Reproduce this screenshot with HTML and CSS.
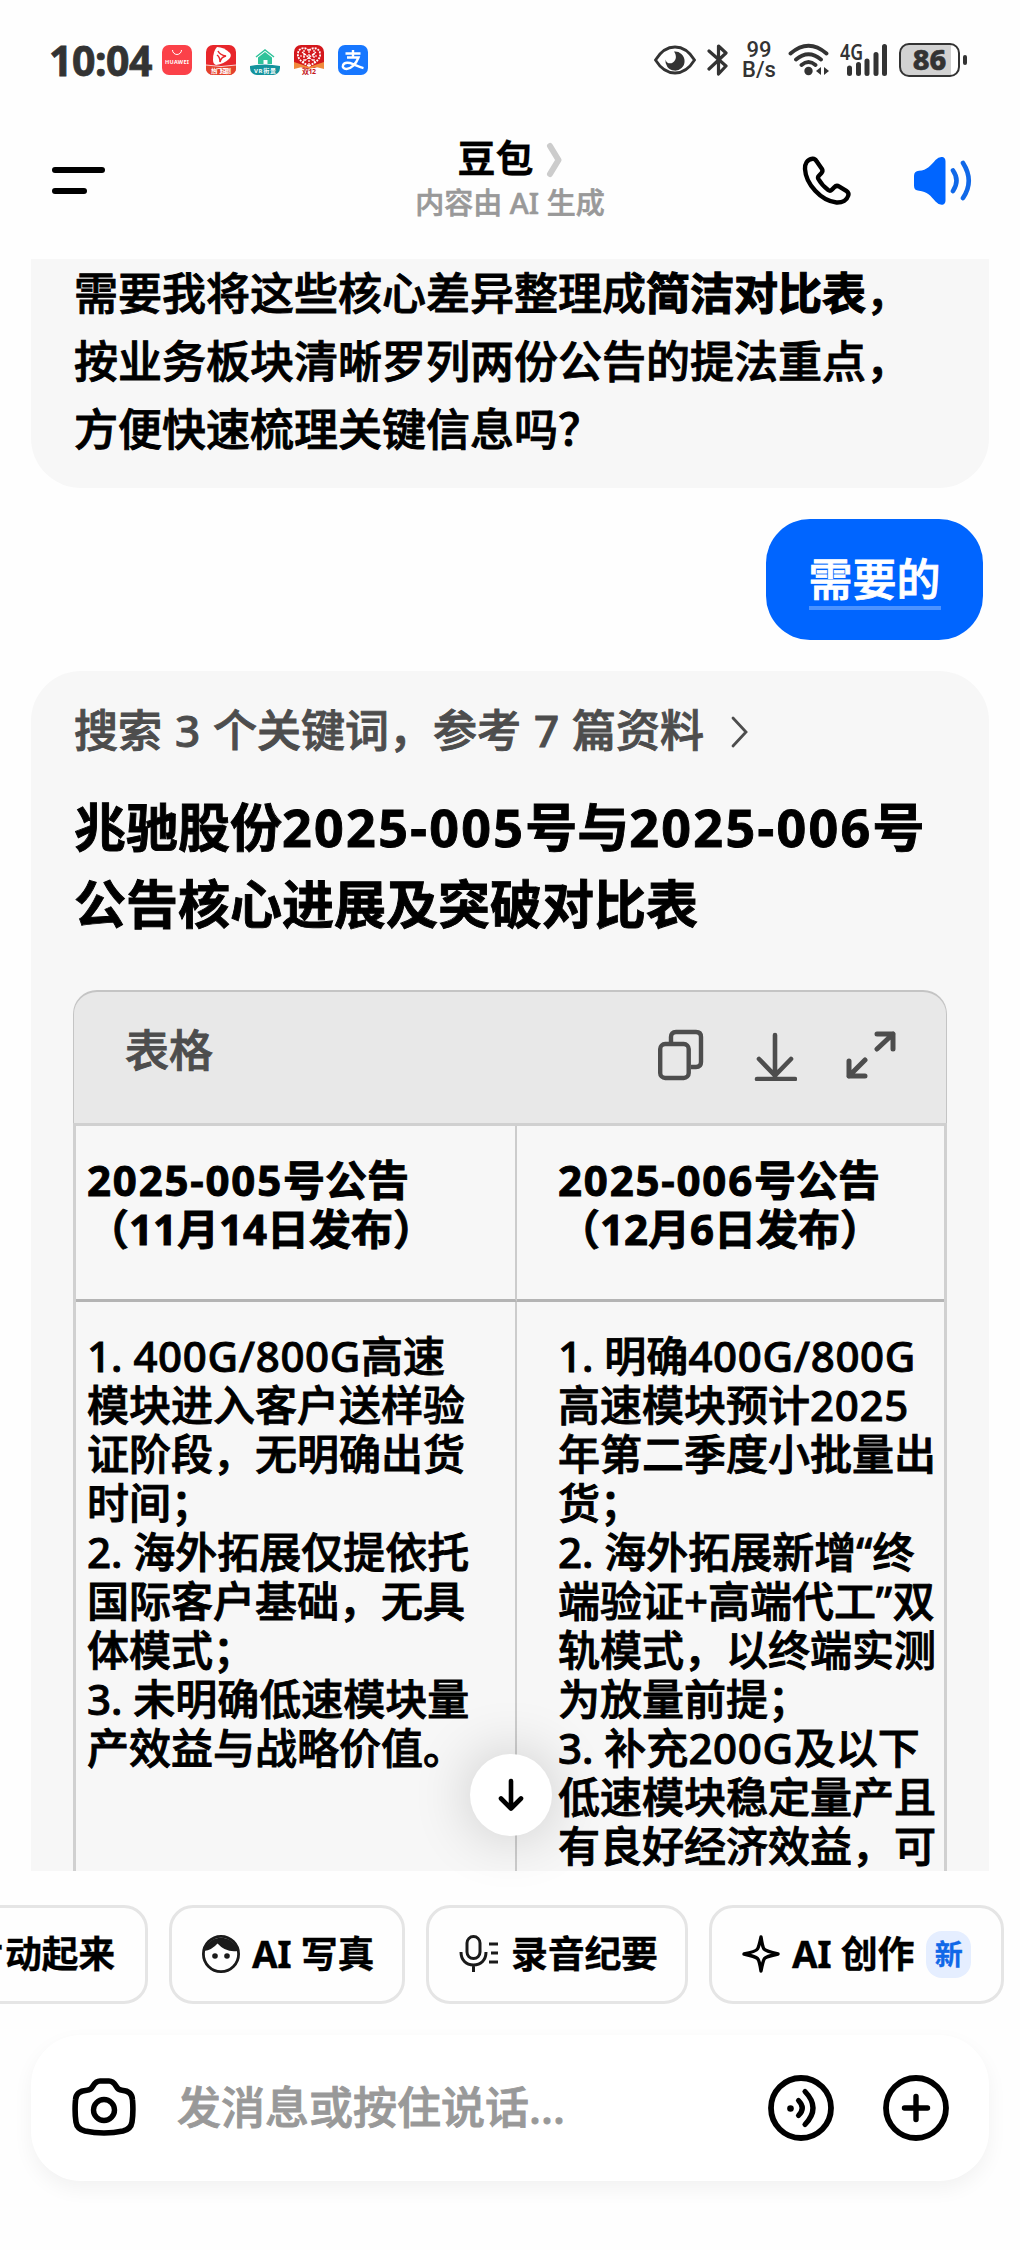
FILE: index.html
```html
<!DOCTYPE html>
<html lang="zh-CN">
<head>
  <meta charset="UTF-8" />
  <title>豆包</title>
  <meta name="viewport" content="width=device-width, initial-scale=1.0">
  <link rel="stylesheet" href="styles.css">
</head>
<body>
  <div class="status-bar">
    <span class="time">10:04</span>
    <div class="apps">
      <svg width="30" height="30" viewBox="0 0 30 30">
        <rect width="30" height="30" rx="7" fill="#fb4149"/>
        <path d="M10.500 5a4.500 4.500 0 0 0 9 0" fill="none" stroke="#fff" stroke-width="1"/>
        <text x="3" y="19" textLength="24" font-size="5.500" font-weight="700" fill="#fff">HUAWEI</text>
      </svg>
      <svg width="30" height="30" viewBox="0 0 30 30">
        <rect width="30" height="30" rx="7" fill="#e8262b"/>
        <path d="M0 20q15 3 30 0v3a7 7 0 0 1-7 7H7a7 7 0 0 1-7-7z" fill="#e4422b"/>
        <path d="M0 20q15 3 30 0" fill="none" stroke="#fff" stroke-width=".8"/>
        <path d="M11 2q7 0 13 6q2 3-1 6q-5 5-13 6q-3-1-3-5q0-9 4-13z" fill="#fff"/>
        <path d="M12 6q2 4 8 5q-5 1-6 6q0-5-3-7" fill="none" stroke="#e8262b" stroke-width="1.500"/>
        <text x="5" y="28" textLength="20" font-size="6" font-weight="700" fill="#fff">热门短剧</text>
      </svg>
      <svg width="30" height="30" viewBox="0 0 30 30">
        <path d="M6 12l9-7 9 7" fill="none" stroke="#2fc39a" stroke-width="1.500"/>
        <path d="M8 12.500l7-5.500 7 5.500V19h-4.500v-4h-4v4H8z" fill="#2fc39a"/>
        <path d="M0 21q15-3 30 0v2a7 7 0 0 1-7 7H7a7 7 0 0 1-7-7z" fill="#14939c"/>
        <text x="4" y="28" textLength="22" font-size="6" font-weight="700" fill="#fff">VR街景</text>
      </svg>
      <svg width="30" height="30" viewBox="0 0 30 30">
        <path d="M7 0h16a7 7 0 0 1 7 7v13l-10 3H10L0 20V7a7 7 0 0 1 7-7z" fill="#d4171c"/>
        <path d="M0 17l15 5 15-5v7l-8-2-7 2-7-2-8 2z" fill="#f08a3c"/>
        <path d="M15 21C7 17 3 13 4 8c1-6 9-6 11-2 2-4 10-4 11 2 1 5-3 9-11 13z" fill="#d4171c" stroke="#fff" stroke-width="1.800" stroke-dasharray="2 1"/>
        <path d="M8 7l13 10M22 7L9 17M6 11h18M15 6v14M10 5v12M20 5v12" stroke="#fff" stroke-width="1.200" stroke-dasharray="2 1"/>
        <text x="8" y="28.500" textLength="14" font-size="7" font-weight="700" fill="#c4161b">双12</text>
      </svg>
      <svg width="30" height="30" viewBox="0 0 30 30">
        <rect width="30" height="30" rx="7" fill="#1777ff"/>
        <path d="M15 5v6.500M7.500 8.500h15M9 12.500h11.500C18 19 13 24 8.500 24c-3 0-4.200-2-3.400-4 1.300-3 6-2.600 9.900-.9 3.500 1.500 6 3 10.500 4" fill="none" stroke="#fff" stroke-width="2.400"/>
      </svg>
    </div>
    <div class="signals">
      <svg class="eye" width="42" height="30" viewBox="0 0 42 30">
        <path d="M1.500 15C7 6 14 2 21 2s14 4 19.500 13C35 24 28 28 21 28S7 24 1.500 15z" fill="none" stroke="#333" stroke-width="2.800"/>
        <path d="M20 6.500a9.600 9.600 0 1 1-8.500 8c.8 3.800 4.600 4.800 7.400 3 3.600-2.300 4-7 1.100-11z" fill="#333"/>
      </svg>
      <svg class="bt" width="22" height="32" viewBox="0 0 22 32">
        <path d="M2 7l17 15-7.500 8V2L19 9 2 25" fill="none" stroke="#333" stroke-width="3.200" stroke-linejoin="round" stroke-linecap="round"/>
      </svg>
      <div class="speed">99<br>B/s</div>
      <svg class="wifi" width="42" height="34" viewBox="0 0 42 34">
        <path d="M2.500 10.500Q20.500-5 38.500 10.500M8 16.500q12.500-10.500 25 0M13.500 22q7-6 14 0" fill="none" stroke="#333" stroke-width="3.800" stroke-linecap="round"/>
        <circle cx="20.500" cy="28" r="4.200" fill="#333"/>
        <path d="M28 28l5-4v8zM41 28l-5-4v8z" fill="#333"/>
      </svg>
      <svg class="cell" width="48" height="34" viewBox="0 0 48 34">
        <text x="0" y="17" textLength="23" lengthAdjust="spacingAndGlyphs" font-size="22" font-weight="600" fill="#333">4G</text>
        <path d="M9.500 25v5.500M18.500 21.500v9M27 18v12.500M36 11.500v19M44.500 3.500v27" stroke="#333" stroke-width="5" stroke-linecap="round"/>
      </svg>
      <div class="battery"><span>86</span></div>
      <i class="battery-tip"></i>
    </div>
  </div>

  <div class="header">
    <div class="menu"><i></i><i></i></div>
    <div class="title">
      <h1>豆包
        <svg width="17" height="36" viewBox="0 0 17 36"><path d="M4 4l8.500 14L4 32" fill="none" stroke="#ccc" stroke-width="6" stroke-linecap="round" stroke-linejoin="round"/></svg>
      </h1>
      <p>内容由 AI 生成</p>
    </div>
    <div class="actions">
      <svg width="50" height="50" viewBox="0 0 50 50">
        <path d="M10.500 2.800C5 3.500 2.800 8 3 13c.8 15 16 32 31.500 33.500 6 .3 10.500-2.500 11.800-7 .6-2-.4-3.700-2-4.700l-7-4.200c-1.700-1-3.700-.8-5 .6l-2.500 2.600c-1 1-2.500 1-3.600.2-4.400-3.300-7.400-6.700-9.800-11-.6-1.200-.4-2.400.5-3.300l2.600-2.700c1.200-1.300 1.200-2.800.3-4.300L14.600 5.300c-1-1.700-2.300-2.700-4.100-2.500z" fill="none" stroke="#000" stroke-width="4.400" stroke-linejoin="round"/>
      </svg>
      <svg width="60" height="50" viewBox="0 0 60 50">
        <path d="M1 20q0-5 5-5.200C14 14.500 18 9 22.500 4Q26 .3 29.500 1q3 .8 3 4.500v39q0 3.500-3 4.300-3.500.5-7-3.300C18 40 14 35.300 6 34.700q-5-.2-5-5z" fill="#0065ff"/>
        <path d="M40 14.500q7 10 0 20.500M50 7q11.500 18 0 35" fill="none" stroke="#1068e8" stroke-width="4.600" stroke-linecap="round"/>
      </svg>
    </div>
  </div>

  <div class="chat">
    <div class="card prev">
      需要我将这些核心差异整理成<b>简洁对比表</b>，<br>
      按业务板块清晰罗列两份公告的提法重点，<br>
      方便快速梳理关键信息吗？
    </div>
    <div class="bubble"><span>需要的</span></div>
    <div class="card answer">
      <div class="search">
        <span>搜索 3 个关键词，参考 7 篇资料</span>
        <svg width="20" height="32" viewBox="0 0 20 32"><path d="M3 2l13 14L3 30" fill="none" stroke="#4d4d4d" stroke-width="2.800" stroke-linecap="round"/></svg>
      </div>
      <h2>兆驰股份<span class="n">2025-005</span>号与<span class="n">2025-006</span>号<br>公告核心进展及突破对比表</h2>
      <div class="table">
        <div class="table-bar">
          <span>表格</span>
          <svg width="46" height="52" viewBox="0 0 46 52">
            <path d="M13 14V8q0-5 5-5h20q5 0 5 5v25q0 5-5 5h-5" fill="none" stroke="#4d4d4d" stroke-width="4.400"/>
            <rect x="2.200" y="15" width="28.500" height="34" rx="5" fill="none" stroke="#4d4d4d" stroke-width="4.400"/>
          </svg>
          <svg width="44" height="52" viewBox="0 0 44 52">
            <path d="M22 6v42M6 30l16 16.500L38 30M4 50h38" fill="none" stroke="#4d4d4d" stroke-width="4.600" stroke-linecap="round"/>
          </svg>
          <svg width="50" height="50" viewBox="0 0 50 50">
            <path d="M31 4h16v15M47 4L31 19M3 31v15h16M3 46l16-16" fill="none" stroke="#4d4d4d" stroke-width="5" stroke-linecap="round" stroke-linejoin="round"/>
          </svg>
        </div>
        <div class="grid">
          <div class="th"><span class="n">2025-005</span>号公告<br>（11月14日发布）</div>
          <div class="th"><span class="n">2025-006</span>号公告<br>（12月6日发布）</div>
          <div class="td">1. <span class="n">400G/800G</span>高速<br>模块进入客户送样验<br>证阶段，无明确出货<br>时间；<br>2. 海外拓展仅提依托<br>国际客户基础，无具<br>体模式；<br>3. 未明确低速模块量<br>产效益与战略价值。</div>
          <div class="td">1. 明确<span class="n">400G/800G</span><br>高速模块预计<span class="n">2025</span><br>年第二季度小批量出<br>货；<br>2. 海外拓展新增“终<br>端验证+高端代工<span class="n">”</span>双<br>轨模式，以终端实测<br>为放量前提；<br>3. 补充<span class="n">200G</span>及以下<br>低速模块稳定量产且<br>有良好经济效益，可</div>
        </div>
      </div>
    </div>
  </div>

  <div class="to-bottom">
    <svg width="30" height="36" viewBox="0 0 30 36"><path d="M15 4v27M5 21.500L15 31.500l10-10" fill="none" stroke="#000" stroke-width="4.600" stroke-linecap="round" stroke-linejoin="round"/></svg>
  </div>

  <div class="chips">
    <div class="chip first">让照片动起来</div>
    <div class="chip photo">
      <svg width="38" height="38" viewBox="0 0 38 38">
        <circle cx="19" cy="19" r="17.600" fill="none" stroke="#1a1a1a" stroke-width="2.800"/>
        <path d="M2 16A17.500 17.500 0 0 1 36 16Q24 18 15.500 8.500 10 15 2 16z" fill="#1a1a1a"/>
        <circle cx="13" cy="21" r="2.800" fill="#1a1a1a"/><circle cx="25" cy="21" r="2.800" fill="#1a1a1a"/>
      </svg>
      AI 写真
    </div>
    <div class="chip record">
      <svg width="40" height="38" viewBox="0 0 40 38">
        <rect x="8" y="1.600" width="13" height="22" rx="6.500" fill="none" stroke="#1a1a1a" stroke-width="3"/>
        <path d="M2 17c0 8 5 13 12.500 13S27 25 27 17M14.500 30v7M30 9h9M32 18h7M30 27h9" fill="none" stroke="#1a1a1a" stroke-width="3"/>
      </svg>
      录音纪要
    </div>
    <div class="chip create">
      <svg width="38" height="38" viewBox="0 0 38 38">
        <path d="M19 2Q20.500 12 22 14T36 19Q24 21.500 22.500 23.500T19 36Q17.500 25.500 15.500 23.500T2 19Q14 16.500 15.500 14T19 2z" fill="none" stroke="#000" stroke-width="3.400" stroke-linejoin="round"/>
      </svg>
      AI 创作
      <em>新</em>
    </div>
  </div>

  <div class="input-bar">
    <svg width="64" height="60" viewBox="0 0 64 60">
      <path d="M21 8q3-5 7-5h9q4 0 7 5 2 4 6 4.300Q60 13 60.500 22q1 12-.5 22-1 7-9 9-9 2-19 2t-19-2q-8-2-9-9-1.500-10-.5-22Q4 13 15 12.300q4-.3 6-4.300z" fill="none" stroke="#000" stroke-width="5.600" stroke-linejoin="round"/>
      <circle cx="32" cy="32" r="10.500" fill="none" stroke="#000" stroke-width="5.400"/>
    </svg>
    <span class="placeholder">发消息或按住说话...</span>
    <svg width="66" height="66" viewBox="0 0 66 66">
      <circle cx="33" cy="33" r="30" fill="none" stroke="#000" stroke-width="5.800"/>
      <circle cx="22.500" cy="33.500" r="3.300" fill="#000"/>
      <path d="M30.500 25.500q7.500 7.500 0 15M37 16.500q16 16.500 0 33" fill="none" stroke="#000" stroke-width="5.200" stroke-linecap="round"/>
    </svg>
    <svg width="66" height="66" viewBox="0 0 66 66">
      <circle cx="33" cy="33" r="30" fill="none" stroke="#000" stroke-width="5.800"/>
      <path d="M33 21.500v23M21.500 33h23" stroke="#000" stroke-width="5.400" stroke-linecap="round"/>
    </svg>
  </div>
</body>
</html>
```

FILE: styles.css
```css
* {
  box-sizing: border-box;
}
body {
  margin: 0;
  width: 1020px;
  height: 2250px;
  overflow: hidden;
  position: relative;
  background: #fefefe;
  color: #000;
  font-family: "Noto Sans", "Noto Sans CJK SC", sans-serif;
  font-weight: 500;
  white-space: nowrap;
  -webkit-text-stroke: 0.9px;
}
svg {
  display: block;
  flex: none;
}
h1, h2, p {
  margin: 0;
}

/* Status bar */
.status-bar {
  display: flex;
  align-items: center;
  height: 120px;
  padding: 0 53px 0 49px;
  color: #333;
  -webkit-text-stroke: 0;
}
.time {
  width: 113px;
  font-size: 41px;
  font-weight: 700;
  letter-spacing: -0.5px;
  line-height: 50px;
  -webkit-text-stroke: 0.8px;
}
.apps {
  display: flex;
  gap: 14px;
}
.signals {
  display: flex;
  align-items: center;
  margin-left: auto;
}
.bt {
  margin-left: 11px;
}
.speed {
  width: 34px;
  margin-left: 13px;
  font-family: Roboto, sans-serif;
  font-size: 22px;
  line-height: 20px;
  text-align: center;
}
.wifi {
  margin-left: 12px;
}
.cell {
  margin-left: 10px;
}
.battery {
  width: 61px;
  height: 34px;
  margin-left: 11px;
  border: 2.5px solid #333;
  border-radius: 10px;
  background: linear-gradient(90deg, #d2d2d2 88%, #fff 88%);
  font-size: 29px;
  font-weight: 800;
  line-height: 28px;
  text-align: center;
  -webkit-text-stroke: 0.6px;
}
.battery-tip {
  width: 4px;
  height: 10px;
  margin-left: 3px;
  border-radius: 2px;
  background: #333;
}

/* Header */
.header {
  display: flex;
  justify-content: space-between;
  height: 139px;
  padding: 0 47px 0 52px;
}
.menu {
  width: 165px;
  padding-top: 47px;
}
.menu i {
  display: block;
  width: 53px;
  height: 6px;
  margin-bottom: 15px;
  border-radius: 3px;
  background: #000;
}
.menu i + i {
  width: 35px;
}
.title {
  padding-top: 14px;
  text-align: center;
}
.title h1 {
  display: flex;
  align-items: center;
  justify-content: center;
  gap: 12px;
  height: 46px;
  font-size: 38px;
  font-weight: 700;
  line-height: 46px;
  -webkit-text-stroke: 0.3px;
}
.title h1 svg {
  margin-top: 6px;
}
.title p {
  margin-top: 3px;
  color: #999;
  font-size: 29px;
  line-height: 40px;
  -webkit-text-stroke: 0.6px;
}
.actions {
  display: flex;
  justify-content: flex-end;
  gap: 61px;
  width: 170px;
  padding-top: 36px;
}

/* Messages */
.chat {
  display: flex;
  flex-direction: column;
  height: 1612px;
  padding: 0 31px;
  overflow: hidden;
}
.card {
  flex: none;
  padding: 0 43px;
  background: #f7f7f7;
}
.prev {
  height: 229px;
  border-radius: 0 0 50px 50px;
  font-size: 44px;
  line-height: 68px;
}
.prev b {
  -webkit-text-stroke: 1.2px;
}
.bubble {
  align-self: flex-end;
  flex: none;
  width: 217px;
  height: 121px;
  margin: 31px 6px 31px 0;
  padding-top: 33px;
  border-radius: 44px;
  background: #0065ff;
  color: #fff;
  font-size: 44px;
  line-height: 54px;
  text-align: center;
}
.bubble span {
  display: inline-block;
  border-bottom: 4px solid #4b92ff;
}
.answer {
  height: 1300px;
  padding-top: 29px;
  border-radius: 50px 50px 0 0;
}
.search {
  display: flex;
  align-items: center;
  gap: 26px;
  height: 60px;
  color: #4d4d4d;
  font-size: 44px;
  line-height: 60px;
  word-spacing: 1.500px;
}
.search svg {
  margin-top: 4px;
}
.answer h2 {
  margin-top: 28px;
  font-size: 52px;
  font-weight: 700;
  line-height: 77px;
}
.n {
  letter-spacing: 0.7px;
}
h2 .n {
  letter-spacing: 2.300px;
}
.th .n {
  letter-spacing: 1.8px;
}

/* Table */
.table {
  width: 874px;
  margin: 48px 0 0 -1px;
}
.table-bar {
  display: flex;
  align-items: center;
  height: 133px;
  padding: 0 50px 6px 51px;
  border: 1px solid #c4c4c4;
  border-width: 2px 1px 0;
  border-radius: 24px 24px 0 0;
  background: #e8e8e8;
  color: #4d4d4d;
  font-size: 44px;
}
.table-bar span {
  margin-right: auto;
  padding-bottom: 10px;
  line-height: 60px;
}
.table-bar svg + svg {
  margin-left: 49px;
}
.grid {
  display: grid;
  grid-template-columns: 441px 1fr;
  grid-template-rows: 176px 700px;
  border: 3px solid #d0d0d0;
  font-size: 42px;
  line-height: 49px;
}
.grid > div {
  padding-left: 11px;
}
.grid > div:nth-child(even) {
  padding-left: 41px;
}
.grid > div:nth-child(odd) {
  border-right: 2px solid #ccc;
}
.th {
  padding-top: 29px;
  border-bottom: 3px solid #b4b4b4;
  font-weight: 700;
}
.td {
  padding-top: 29px;
}

.to-bottom {
  position: absolute;
  left: 470px;
  top: 1754px;
  display: flex;
  align-items: center;
  justify-content: center;
  width: 82px;
  height: 82px;
  border-radius: 50%;
  background: #fff;
  box-shadow: 0 0 60px rgba(0, 0, 0, 0.2);
}

/* Bottom chips */
.chips {
  display: flex;
  justify-content: flex-end;
  gap: 21px;
  margin-top: 34px;
  padding-right: 16px;
}
.chip {
  display: flex;
  flex: none;
  align-items: center;
  gap: 12px;
  height: 99px;
  padding: 0 30px 1px;
  border: 3px solid #e5e5e5;
  border-radius: 24px;
  font-size: 37px;
  font-weight: 700;
  letter-spacing: -0.3px;
  line-height: 46px;
  -webkit-text-stroke: 0.3px;
}
.first {
  width: 300px;
  justify-content: flex-end;
}
.photo {
  width: 236px;
}
.record {
  width: 262px;
}
.create {
  width: 295px;
}
.chip em {
  width: 49px;
  height: 47px;
  border-radius: 16px;
  background: #e5eeff;
  color: #1068e8;
  font-size: 28px;
  font-style: normal;
  line-height: 46px;
  text-align: center;
}

.input-bar {
  display: flex;
  align-items: center;
  height: 146px;
  margin: 31px 31px 0;
  padding: 0 40px 0 41px;
  border-radius: 50px;
  background: #fff;
  box-shadow: 0 8px 20px rgba(0, 0, 0, 0.05);
}
.placeholder {
  margin: -2px auto 0 41px;
  color: #999;
  font-size: 44px;
  line-height: 60px;
}
.input-bar svg + svg {
  margin-left: 49px;
}
```
